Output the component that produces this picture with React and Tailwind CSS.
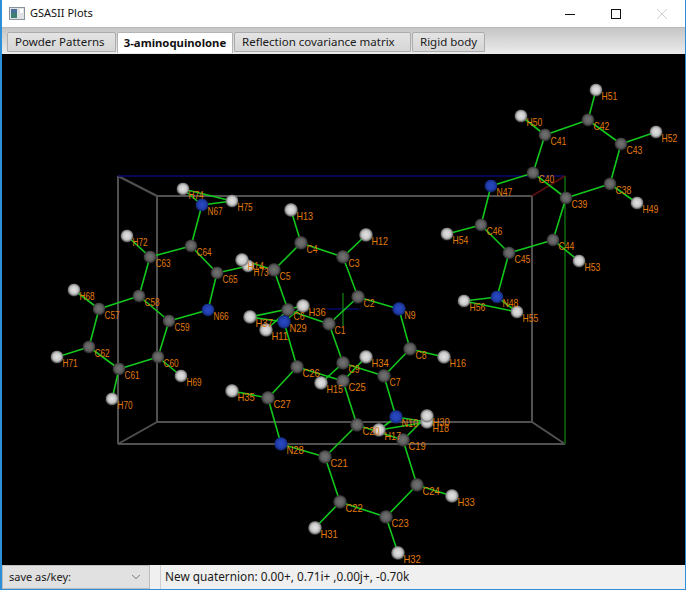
import { ChevronDown } from "lucide-react";

const uiFont = { fontFamily: '"Noto Sans", sans-serif' };

// atoms per molecule: name, x, y, label size
const molecules = [
  {
    size: 10,
    atoms: [
      ["H74", 183, 190], ["N67", 202, 206], ["H75", 232, 202], ["C64", 191, 247], ["C63", 150, 258],
      ["H72", 127, 237], ["C65", 217, 274], ["H73", 248, 267], ["C58", 139, 297], ["C57", 99, 310],
      ["H68", 74, 291], ["N66", 208, 311], ["C59", 169, 322], ["C62", 89, 348], ["H71", 57, 358],
      ["C60", 158, 358], ["C61", 119, 370], ["H70", 112, 400], ["H69", 181, 377],
    ],
  },
  {
    size: 10.5,
    atoms: [
      ["H51", 596, 91], ["H50", 521, 117], ["C42", 588, 121], ["C41", 545, 136], ["H52", 656, 133],
      ["C43", 621, 145], ["C40", 533, 174], ["N47", 491, 187], ["C38", 610, 185], ["C39", 566, 199],
      ["H49", 637, 204], ["C46", 481, 226], ["H54", 447, 235], ["C44", 553, 241], ["C45", 509, 254],
      ["H53", 579, 262], ["N48", 497, 298], ["H56", 464, 302], ["H55", 517, 313],
    ],
  },
  {
    size: 11,
    atoms: [
      ["H13", 291, 211], ["C4", 301, 244], ["C3", 343, 258], ["H12", 366, 236], ["C5", 274, 271],
      ["H14", 242, 261], ["C2", 358, 298], ["N9", 399, 310], ["C6", 288, 311], ["H11", 266, 331],
      ["C1", 329, 325], ["C8", 410, 350], ["H16", 444, 358], ["C9", 343, 364], ["H15", 321, 384],
      ["C7", 384, 377], ["N10", 396, 418], ["H18", 427, 423], ["H17", 379, 431],
    ],
  },
  {
    size: 11.5,
    atoms: [
      ["H36", 303, 307], ["H37", 250, 318], ["N29", 284, 323], ["C26", 297, 368], ["H34", 366, 358],
      ["C25", 343, 382], ["H35", 232, 392], ["C27", 268, 399], ["H30", 427, 417], ["C20", 357, 426],
      ["C19", 403, 441], ["N28", 281, 445], ["C21", 325, 458], ["C24", 417, 486], ["H33", 452, 497],
      ["C22", 340, 503], ["C23", 386, 518], ["H31", 315, 529], ["H32", 398, 554],
    ],
  },
];

const bonds = `C1-C2 C2-C3 C3-C4 C4-C5 C5-C6 C6-C1 C3-H12 C4-H13 C5-H14 C6-H11 C2-N9 N9-C8 C8-C7 C8-H16
C7-C9 C9-C1 C9-H15 C7-N10 N10-H17 N10-H18 H17-H18
N29-H36 N29-H37 H37-H36 N29-C26 C26-C25 C26-C27 C27-H35 C27-N28 N28-C21 C21-C20 C21-C22 C22-C23 C22-H31
C23-H32 C23-C24 C24-H33 C24-C19 C19-C20 C19-H30 C20-C25 C25-H34
C38-C39 C39-C40 C40-C41 C41-C42 C42-C43 C43-C38 C38-H49 C41-H50 C42-H51 C43-H52 C40-N47 N47-C46 C46-C45
C45-C44 C44-C39 C46-H54 C44-H53 C45-N48 N48-H56 N48-H55 H56-H55
C57-C58 C58-C63 C63-C64 C64-C65 C65-N66 N66-C59 C59-C58 C59-C60 C60-C61 C61-C62 C62-C57 C57-H68 C60-H69
C61-H70 C62-H71 C63-H72 C64-N67 N67-H74 N67-H75 H74-H75 C65-H73`
  .split(/\s+/)
  .map((b) => b.split("-"));

const allAtoms = molecules.flatMap((m) =>
  m.atoms.map(([name, x, y]) => ({ name, x, y, size: m.size }))
);
const byName = Object.fromEntries(allAtoms.map((a) => [a.name, a]));

const boxLines = [
  [118, 177, 118, 445], [157, 197, 157, 423], [532, 197, 532, 423],
  [157, 197, 532, 197], [157, 423, 532, 423], [118, 445, 565, 445],
  [118, 177, 157, 197], [118, 445, 157, 423], [532, 423, 565, 445],
];

const sphereFill = { C: "url(#carbon)", N: "url(#nitrogen)", H: "url(#hydrogen)" };

function Gradient({ id, stops }) {
  return (
    <radialGradient id={id} cx="50%" cy="48%" r="50%">
      <stop offset="0%" stopColor={stops[0]} />
      <stop offset="60%" stopColor={stops[1]} />
      <stop offset="85%" stopColor={stops[2]} />
      <stop offset="100%" stopColor={stops[2]} stopOpacity="0.35" />
    </radialGradient>
  );
}

function MoleculePlot() {
  return (
    <svg viewBox="2 55 683 511" className="block w-[683px] h-[511px] bg-black">
      <defs>
        <Gradient id="carbon" stops={["#737373", "#5f5f5f", "#3c3c3c"]} />
        <Gradient id="nitrogen" stops={["#2a48c4", "#2140ae", "#182c84"]} />
        <Gradient id="hydrogen" stops={["#e4e4e4", "#c8c8c8", "#808080"]} />
      </defs>

      {boxLines.map(([x1, y1, x2, y2], i) => (
        <line key={i} x1={x1} y1={y1} x2={x2} y2={y2} stroke="#505050" strokeWidth="2" />
      ))}
      <line x1="118" y1="177" x2="565" y2="177" stroke="#0a0a70" strokeWidth="1.6" />
      <line x1="565" y1="177" x2="565" y2="445" stroke="#0c5a0c" strokeWidth="1.8" />
      <line x1="532" y1="197" x2="565" y2="177" stroke="#5a0f0f" strokeWidth="1.8" />
      <line x1="327" y1="310" x2="359" y2="310" stroke="#0a0a70" strokeWidth="1.4" />
      <line x1="343" y1="294" x2="343" y2="327" stroke="#0c5a0c" strokeWidth="1.8" />

      {bonds.map(([a, b]) => (
        <line
          key={a + b}
          x1={byName[a].x}
          y1={byName[a].y}
          x2={byName[b].x}
          y2={byName[b].y}
          stroke="#12c81c"
          strokeWidth="1.6"
        />
      ))}

      {allAtoms.map((a) => (
        <circle key={a.name} cx={a.x} cy={a.y} r={a.size >= 11 ? 7 : 6.6} fill={sphereFill[a.name[0]]} />
      ))}

      {allAtoms.map((a) => (
        <text
          key={a.name}
          x={a.x + 5.5}
          y={a.y + 10}
          fill="#e07b0c"
          fontSize={a.size}
          fontFamily='"Liberation Sans", sans-serif'
          textLength={a.name.length * a.size * 0.5}
          lengthAdjust="spacingAndGlyphs"
        >
          {a.name}
        </text>
      ))}
    </svg>
  );
}

function Tab({ label, active, width }) {
  if (active) {
    return (
      <div
        className="h-[21px] bg-white border border-b-0 border-[#b4b4b4] rounded-t-[2px] flex items-center justify-center font-bold text-[#111] text-[11.3px]"
        style={{ width }}
      >
        {label}
      </div>
    );
  }
  return (
    <div
      className="h-[20px] pl-[7px] bg-gradient-to-b from-[#e4e4e4] to-[#d6d6d6] border border-[#acacac] rounded-t-[2px] flex items-center text-[#1a1a1a] text-[11.5px]"
      style={{ width }}
    >
      {label}
    </div>
  );
}

export default function App() {
  return (
    <div
      className="w-[686px] h-[590px] flex flex-col overflow-hidden bg-white border-l-2 border-r border-b border-[#2d8fd8]"
      style={uiFont}
    >
      <div className="h-[28px] shrink-0 flex items-center bg-white border-b border-[#b9b9b9]">
        <svg width="16" height="14" viewBox="0 0 16 14" className="ml-[7px]">
          <rect x="0.5" y="0.5" width="15" height="12" fill="#dfe3e6" stroke="#8a939c" />
          <rect x="2" y="2" width="6" height="9" fill="#3f7f72" />
          <rect x="2" y="2" width="6" height="4" fill="#4a6f99" />
          <rect x="11" y="2" width="3" height="4" fill="#ffffff" />
        </svg>
        <span className="ml-[5px] text-[11px] text-[#111]">GSASII Plots</span>
        <div className="ml-auto flex items-center">
          <svg width="46" height="16" viewBox="0 0 46 16">
            <line x1="17" y1="8.5" x2="27" y2="8.5" stroke="#111" />
          </svg>
          <svg width="46" height="16" viewBox="0 0 46 16">
            <rect x="17.5" y="3.5" width="9" height="9" fill="none" stroke="#111" />
          </svg>
          <svg width="46" height="16" viewBox="0 0 46 16" className="mr-[-1px]">
            <path d="M17 3l10 10M27 3L17 13" stroke="#cfcfcf" fill="none" />
          </svg>
        </div>
      </div>

      <div className="h-[26px] shrink-0 flex items-start pt-[4px] pl-[5px] gap-[1px] bg-gradient-to-b from-[#c6c6c6] to-[#ececec]">
        <Tab label="Powder Patterns" width={109} />
        <Tab label="3-aminoquinolone" active width={116} />
        <Tab label="Reflection covariance matrix" width={177} />
        <Tab label="Rigid body" width={73} />
      </div>

      <MoleculePlot />

      <div className="flex-1 flex items-stretch bg-[#f0f0f0] text-[#1a1a1a]">
        <div className="w-[148px] flex items-center justify-between pl-[6px] pr-[6px] bg-[#e1e1e1] border border-[#bcbcbc] text-[11px]">
          <span>save as/key:</span>
          <ChevronDown size={14} strokeWidth={1.2} color="#444" />
        </div>
        <div className="ml-[10px] pl-[4px] flex items-center border-l border-[#cfcfcf] text-[11.8px]">
          New quaternion: 0.00+, 0.71i+ ,0.00j+, -0.70k
        </div>
      </div>
    </div>
  );
}
